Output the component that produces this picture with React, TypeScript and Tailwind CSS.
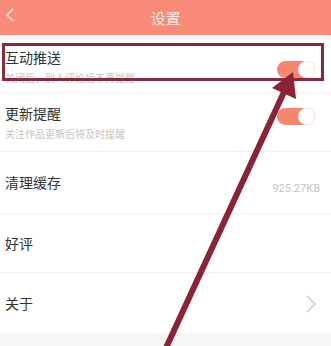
import React from 'react';

const Toggle: React.FC = () => (
  <div className="relative w-[38px] h-[17px] rounded-full bg-[#f7866f]">
    <div className="absolute right-0 top-0 w-[17px] h-[17px] rounded-full bg-white shadow-[0_0_1px_rgba(0,0,0,0.08)]" />
  </div>
);

const App: React.FC = () => {
  return (
    <div className="relative w-[331px] h-[346px] overflow-hidden bg-[#f6f6f6] font-['Noto_Sans_CJK_SC',sans-serif]">
      {/* header */}
      <div className="relative h-[35px] bg-[#f88b78] flex items-center justify-center">
        <svg className="absolute left-[5px] top-[8px]" width="10" height="14" viewBox="0 0 10 14">
          <path d="M8 1 L2 7 L8 13" fill="none" stroke="#fde9e4" strokeWidth="1.6" />
        </svg>
        <span className="text-[15px] text-[#fde6e0] leading-none">设置</span>
      </div>

      <div className="mt-[5px] flex flex-col gap-[2px]">
        <div className="h-[52px] bg-white flex items-center justify-between pl-[5px] pr-[16px]">
          <div className="flex flex-col">
            <span className="text-[14px] leading-[17px] text-[#333]">互动推送</span>
            <span className="mt-[6px] text-[10px] leading-[12px] text-[#c4c4c4]">关闭后，别人评论后不再提醒</span>
          </div>
          <div className="mt-[6px]"><Toggle /></div>
        </div>

        <div className="h-[56px] bg-white flex items-center justify-between pl-[5px] pr-[16px]">
          <div className="flex flex-col">
            <span className="text-[14px] leading-[17px] text-[#333]">更新提醒</span>
            <span className="mt-[6px] text-[10px] leading-[12px] text-[#c4c4c4]">关注作品更新后将及时提醒</span>
          </div>
          <div className="mb-[12px]"><Toggle /></div>
        </div>

        <div className="h-[61px] bg-white flex items-center justify-between pl-[5px] pr-[11px]">
          <span className="text-[14px] leading-[17px] text-[#333]">清理缓存</span>
          <span className="mt-[14px] text-[11px] text-[#c4c4c4] font-['Roboto',sans-serif]">925.27KB</span>
        </div>

        <div className="h-[57px] bg-white flex items-center pl-[5px]">
          <span className="text-[14px] leading-[17px] text-[#333]">好评</span>
        </div>

        <div className="h-[59px] bg-white flex items-center justify-between pl-[5px] pr-[15px]">
          <span className="text-[14px] leading-[17px] text-[#333]">关于</span>
          <svg width="10" height="18" viewBox="0 0 10 18">
            <path d="M1 1 L9 9 L1 17" fill="none" stroke="#c8c8c8" strokeWidth="1.3" />
          </svg>
        </div>
      </div>

      {/* annotation overlay */}
      <div className="absolute left-[2px] top-[43px] w-[322px] h-[38px] border-[3px] border-[#8b2a3c]" />
      <svg className="absolute left-0 top-0 pointer-events-none" width="331" height="346" viewBox="0 0 331 346">
        <line x1="165" y1="350" x2="284" y2="92" stroke="#8c2236" strokeWidth="6" />
        <polygon points="293,72 296,99 272,88" fill="#8c2236" />
      </svg>
    </div>
  );
};

export default App;
